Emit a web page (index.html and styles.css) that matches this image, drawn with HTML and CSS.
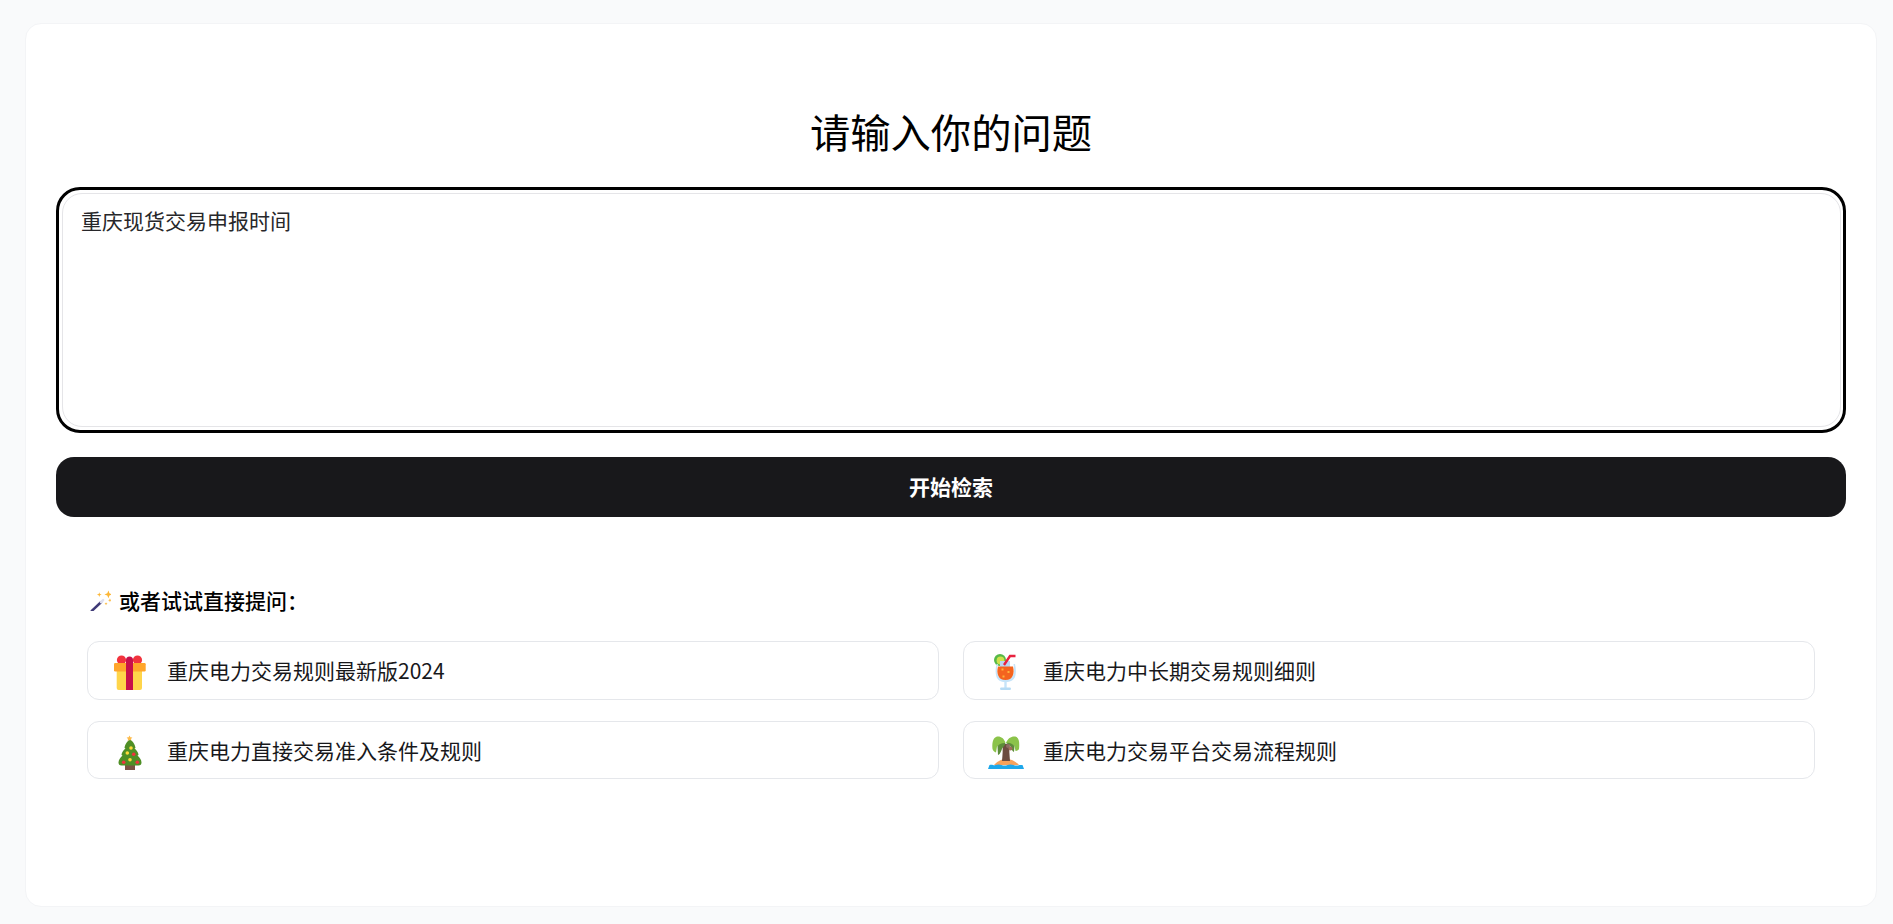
FILE: index.html
```html
<!DOCTYPE html>
<html lang="zh-CN">
<head>
<meta charset="utf-8">
<title>请输入你的问题</title>
<link rel="stylesheet" href="styles.css">
</head>
<body>
<main class="card">
  <h1 class="title">请输入你的问题</h1>
  <div class="input-ring">
    <div class="input-inner">重庆现货交易申报时间</div>
  </div>
  <button class="search" type="button">开始检索</button>
  <section class="try">
    <h2 class="try-head">
      <svg class="wand" viewBox="0 0 24 24" aria-hidden="true">
        <path d="M2 24 L12.500 14" stroke="#3f3a77" stroke-width="2.800" stroke-linecap="round"/>
        <path d="M12.500 14 L15 11.600" stroke="#dfe0ee" stroke-width="2.800" stroke-linecap="round"/>
        <path d="M21 .5l1.200 3.300 3.300 1.200-3.300 1.200L21 9.500l-1.200-3.300L16.500 5l3.300-1.200zM10.600 2.500l.7 2 2 .7-2 .7-.7 2-.7-2-2-.7 2-.7zM22.800 9.500l.6 1.600 1.600.6-1.600.6-.6 1.600-.6-1.600-1.600-.6 1.600-.6zM18.300 14l.5 1.200 1.200.5-1.200.5-.5 1.200-.5-1.200-1.200-.5 1.200-.5z" fill="#fcb635"/>
      </svg>
      <span>或者试试直接提问：</span>
    </h2>
    <div class="grid">
      <a class="item">
        <svg class="icon" viewBox="0 0 36 36" aria-hidden="true">
          <circle cx="9.500" cy="6" r="4.600" fill="#f2333d"/><circle cx="25.500" cy="6" r="4.600" fill="#f2333d"/>
          <path d="M4.700 17h25.300v17a2 2 0 0 1-2 2H6.700a2 2 0 0 1-2-2z" fill="#ffd54a"/>
          <rect x="2" y="9" width="31.700" height="8.500" rx="1.200" fill="#ffa62b"/>
          <path d="M14 6a3.500 3.500 0 0 1 7 0v30h-7z" fill="#c8104a"/>
        </svg>
        <span>重庆电力交易规则最新版2024</span>
      </a>
      <a class="item">
        <svg class="icon" viewBox="0 0 36 36" aria-hidden="true">
          <circle cx="12" cy="6" r="6" fill="#56b947"/><circle cx="12.500" cy="6.500" r="3.900" fill="#cfe04c"/>
          <path d="M12 7h10v6H12z" fill="#b9d8f5"/>
          <path d="M8.500 10h1.500c-1.300 5-1.300 8 0 11 1 2.500 3.500 4 7.500 4s6.500-1.500 7.500-4c1.300-3 1.300-6 .5-11H27c1.200 5 1.200 9.500 0 13-1.300 3-4.500 5-9.500 5S9.800 26 8.500 23c-1.200-4-1.200-8 0-13z" fill="#c6e4f9"/>
          <path d="M10 12.500h15c1 4 .8 6.500-.2 9-1.200 3-3.700 4.500-7.300 4.500s-6.200-1.500-7.300-4.500c-1-2.500-1.200-5-.2-9z" fill="#f4641f"/>
          <path d="M16 11L22 2h5.500" fill="none" stroke="#e8233f" stroke-width="2.400"/>
          <rect x="16.300" y="27" width="2.400" height="7" fill="#c6e4f9"/><rect x="12" y="33.500" width="11" height="2.500" rx="1.200" fill="#b5dbf5"/>
          <path d="M13.500 14.500h2v2h-2zM19.500 17h2v2h-2zM14.500 21.500h2v2h-2z" fill="#ffb13b"/>
        </svg>
        <span>重庆电力中长期交易规则细则</span>
      </a>
      <a class="item">
        <svg class="icon" viewBox="0 0 36 36" aria-hidden="true">
          <path d="M17.500 1.500l.9 1.800 2 .3-1.400 1.400.3 2-1.800-.9-1.800.9.300-2-1.400-1.400 2-.3z" fill="#fdbb4b"/>
          <rect x="13" y="31" width="10" height="5" fill="#7b5443"/>
          <path d="M18 6c2 0 5 4 5.500 8l-1 .5c2 1.500 4 4 4 6.500l-1 .5c2 1.500 4 4.500 4 7 0 2-1 3-3 3H9.500c-2 0-3-1-3-3 0-2.500 2-5.500 4-7l-1-.5c0-2.500 2-5 4-6.500l-1-.5C13 10 16 6 18 6z" fill="#4f8f25"/>
          <circle cx="19" cy="14" r="1.800" fill="#ffd93b"/><circle cx="15.300" cy="19" r="1.800" fill="#ffd93b"/><circle cx="21.700" cy="20.300" r="1.800" fill="#f0333c"/><circle cx="18" cy="25.700" r="1.800" fill="#ffd93b"/><circle cx="11.700" cy="28.300" r="1.800" fill="#f0333c"/><circle cx="25.300" cy="28.300" r="1.800" fill="#f0333c"/>
        </svg>
        <span>重庆电力直接交易准入条件及规则</span>
      </a>
      <a class="item">
        <svg class="icon" viewBox="0 0 36 36" aria-hidden="true">
          <path d="M6 31c3-3.500 7-6 12-6s10 2.500 13 6z" fill="#f7a25c"/>
          <path d="M14.500 10h7c-.5 5 0 11 .5 17h-8c.5-6 1-12 .5-17z" fill="#6d4c41"/>
          <path d="M0 35l1.500-4c3-1 4 .8 6 0s4-.8 6 0 4 .8 6 0 4-.8 6 0 4 .8 6 0l3 0 1.500 4z" fill="#1ea7ea"/>
          <path d="M17.500 9C16 3.500 11 1.500 8 3 4.500 4.500 4 10 4.500 15c.5 2 2 3 3.500 3.500l1-6 3-1.500z" fill="#8bc34a"/>
          <path d="M17.500 9c-3-.5-7 1-8 3.500L10 21c3-1 3.500-6 4.500-7 1.500-1.500 2.500-3 3-5z" fill="#5d8d3a"/>
          <path d="M18 9c2-5.500 7-7.500 10.500-6 3 1.500 3 7 2.500 12-.5 1-2 2-3.500 2l-1-5-3-1.500z" fill="#8bc34a"/>
          <path d="M18 9c3-1 6.500.5 8.500 3l-.5 6c-2-.5-3-5.500-4.500-7z" fill="#5d8d3a"/>
          <circle cx="20" cy="12" r="2" fill="#8d6e63"/><circle cx="22.500" cy="14.500" r="2" fill="#a1705a"/>
        </svg>
        <span>重庆电力交易平台交易流程规则</span>
      </a>
    </div>
  </section>
</main>
</body>
</html>
```
FILE: styles.css
```css
* { box-sizing: border-box; }
html, body { margin: 0; height: 100%; }
body {
  background: #f9fafb;
  padding: 23px 16px 17px 25px;
  font-family: "Noto Sans CJK SC", "Noto Sans", sans-serif;
  color: #111;
}
.card {
  height: 100%;
  background: #fff;
  border: 1px solid #f3f4f6;
  border-radius: 16px;
  padding: 77px 30px 0;
  display: flex;
  flex-direction: column;
}
.title {
  margin: 0 0 26px;
  font-size: 40.300px;
  line-height: 60px;
  font-weight: 400;
  text-align: center;
  color: #000;
}
.input-ring {
  height: 246px;
  flex: none;
  border: 3px solid #000;
  border-radius: 24px;
  padding: 3px 2px 3px 3px;
  background: #fff;
}
.input-inner {
  height: 100%;
  border: 1px solid #e5e5e8;
  border-radius: 20px;
  padding: 11px 18px;
  font-size: 21px;
  line-height: 31px;
  color: #27272a;
}
.search {
  margin-top: 24px;
  height: 60px;
  flex: none;
  border: 0;
  border-radius: 18px;
  padding: 0 0 2px;
  background: #18181b;
  color: #fff;
  font: 600 21px "Noto Sans CJK SC", sans-serif;
}
.try { padding: 67px 31px 0; }
.try-head {
  margin: 0 0 25px;
  display: flex;
  align-items: center;
  gap: 8px;
  font-size: 21px;
  line-height: 32px;
  font-weight: 500;
  color: #000;
  padding-left: 3px;
}
.wand { width: 21px; height: 21px; flex: none; }
.grid {
  display: grid;
  grid-template-columns: 1fr 1fr;
  column-gap: 24px;
  row-gap: 21px;
}
.item {
  height: 58.500px;
  display: flex;
  align-items: center;
  gap: 19px;
  padding-left: 24px;
  border: 1px solid #e5e7eb;
  border-radius: 12px;
  font-size: 21px;
  color: #18181b;
}
.icon { width: 36px; height: 36px; flex: none; margin-top: 4px; }
```
